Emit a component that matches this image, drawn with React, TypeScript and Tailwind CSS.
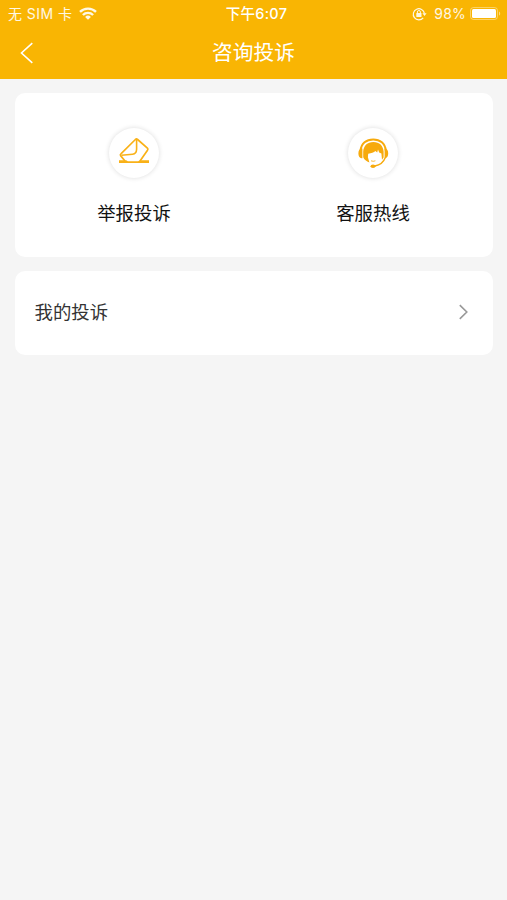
import type { ReactNode } from "react";

type ContactEntry = {
  id: string;
  label: string;
  icon: ReactNode;
};

function WifiIcon() {
  return (
    <svg width="18" height="13" viewBox="0 0 18 13" fill="none" stroke="currentColor" strokeWidth="2.4">
      <path d="M1 4.9a11.4 11.4 0 0 1 16 0" />
      <path d="M3.9 8a7.2 7.2 0 0 1 10.2 0" />
      <path d="M9 12.8 6.1 10a4.1 4.1 0 0 1 5.8 0z" fill="currentColor" stroke="none" />
    </svg>
  );
}

function RotationLockIcon() {
  return (
    <svg width="15" height="14" viewBox="0 0 15 14" fill="none" stroke="currentColor">
      <path d="M11.2 10.9A5.6 5.6 0 1 1 12.4 6.4" strokeWidth="1.2" />
      <path d="M10.4 6.2h4.2l-2.1 2.8z" fill="currentColor" stroke="none" />
      <rect x="4.3" y="6.1" width="5.2" height="3.9" rx="0.5" fill="currentColor" stroke="none" />
      <path d="M5.4 6.3V5a1.5 1.5 0 0 1 3 0v1.3" strokeWidth="1" />
    </svg>
  );
}

function BatteryIcon() {
  return (
    <svg width="31" height="13" viewBox="0 0 31 13" fill="none">
      <rect x="0.5" y="0.5" width="27" height="12" rx="3" stroke="white" strokeOpacity="0.4" />
      <rect x="2" y="2" width="24" height="9" rx="1.5" fill="white" />
      <path d="M29 4.4c1.6.6 1.6 3.6 0 4.2z" fill="white" fillOpacity="0.5" />
    </svg>
  );
}

function EnvelopeIcon() {
  return (
    <svg width="32" height="32" viewBox="0 0 32 32" fill="none" stroke="#f9b117" strokeLinejoin="round">
      <path d="M7 24 2.6 18.6q-.7-1 .3-1.8L17.4 2.5q1.2-1 2.2 0l9.8 8.6q1 1 .1 2.1L22 24" strokeWidth="1.7" />
      <path d="M18.6 3v9.2q-.1 4.6-4 5L3.4 18.3" strokeWidth="1.6" />
      <path d="M1 23.2h7.2l1.6 1.1h10.4l1.6-1.1H31v2.9H1z" fill="#f9b117" stroke="none" />
    </svg>
  );
}

function HeadsetIcon() {
  return (
    <svg width="32" height="32" viewBox="0 0 32 32" fill="none" stroke="#f7aa0c">
      <path d="M3.6 13.5C4.2 6.4 9.3 2.4 16.2 2.4S28.2 6.4 28.8 13.5" strokeWidth="2" />
      <path
        d="M6.2 14.6C6.6 8.8 10.4 5 16.4 5s9.8 3.8 10.2 9.6v5.8l-1.6 2.4-.6-6.2-2.2-1.2-1.2-2.8-.8 2.8-1.8-1.4c-1.6 1.4-4 2.3-7.2 2.7l-.3 3.6 1.5 5.1c-3-1-5.2-2.8-6.2-5.2z"
        fill="#f7aa0c"
        stroke="none"
      />
      <path d="M5.4 11.6v9.6h-.9Q1.4 20.6 1.4 16.4t3.1-4.8zM27.6 11.6v9.6h.5q3.1-.6 3.1-4.8t-3.1-4.8z" fill="#f7aa0c" stroke="none" />
      <path d="M14 23.8q2.2 1 4.4 0" strokeWidth="0.8" />
      <path d="M28.2 20.8c-1.6 4.6-5.2 7.2-10.4 8.2" strokeWidth="1.4" />
      <ellipse cx="16" cy="29.2" rx="2.5" ry="1.7" fill="#f7aa0c" stroke="none" />
    </svg>
  );
}

const entries: ContactEntry[] = [
  { id: "report", label: "举报投诉", icon: <EnvelopeIcon /> },
  { id: "hotline", label: "客服热线", icon: <HeadsetIcon /> }
];

function StatusBar() {
  return (
    <div className="grid h-[27px] grid-cols-3 items-center pl-2 pr-[6px] text-[14px] leading-[27px] text-white/90">
      <div className="flex items-center gap-[7px]">
        <span className="whitespace-nowrap tracking-[0.45px]">无 SIM 卡</span>
        <WifiIcon />
      </div>
      <span className="pl-1 text-center text-[14.5px] font-medium tracking-[0.3px] text-white">下午6:07</span>
      <div className="flex items-center justify-end">
        <RotationLockIcon />
        <span className="ml-[7px] mr-[4px] tracking-[0.2px]">98%</span>
        <BatteryIcon />
      </div>
    </div>
  );
}

export default function App() {
  return (
    <div className="min-h-screen bg-[#f5f5f5] font-['Inter','Noto_Sans_CJK_SC',sans-serif]">
      <header className="h-[79px] bg-[#f9b503]">
        <StatusBar />
        <div className="grid h-[52px] grid-cols-[53px_1fr_53px] items-center">
          <button className="flex pl-5" type="button" aria-label="返回">
            <svg width="14" height="22" viewBox="0 0 14 22" fill="none" stroke="white" strokeWidth="1.6">
              <path d="M12.3 1.2 1.5 11l10.8 9.8" />
            </svg>
          </button>
          <h1 className="text-center text-[20.7px] leading-[52px] text-white">咨询投诉</h1>
        </div>
      </header>

      <main className="flex flex-col gap-[14px] px-[14.5px] pt-[14px]">
        <section className="grid h-[164px] grid-cols-2 rounded-[10px] bg-white">
          {entries.map((entry) => (
            <button className="flex flex-col items-center pt-[35px]" key={entry.id} type="button">
              <span className="flex h-[50px] w-[50px] items-center justify-center rounded-full bg-white shadow-[0_0_5px_rgba(0,0,0,0.14)]">
                {entry.icon}
              </span>
              <span className="mt-[21px] text-[18.4px] leading-7 text-[#111111]">{entry.label}</span>
            </button>
          ))}
        </section>

        <button className="flex h-[84px] items-center justify-between rounded-[10px] bg-white pb-[3px] pl-5 pr-[25px]" type="button">
          <span className="text-[18.4px] leading-7 text-[#333333]">我的投诉</span>
          <svg width="9" height="16" viewBox="0 0 9 16" fill="none" stroke="#999999" strokeWidth="1.6">
            <path d="m.8 1.1 7 6.9-7 6.9" />
          </svg>
        </button>
      </main>
    </div>
  );
}
